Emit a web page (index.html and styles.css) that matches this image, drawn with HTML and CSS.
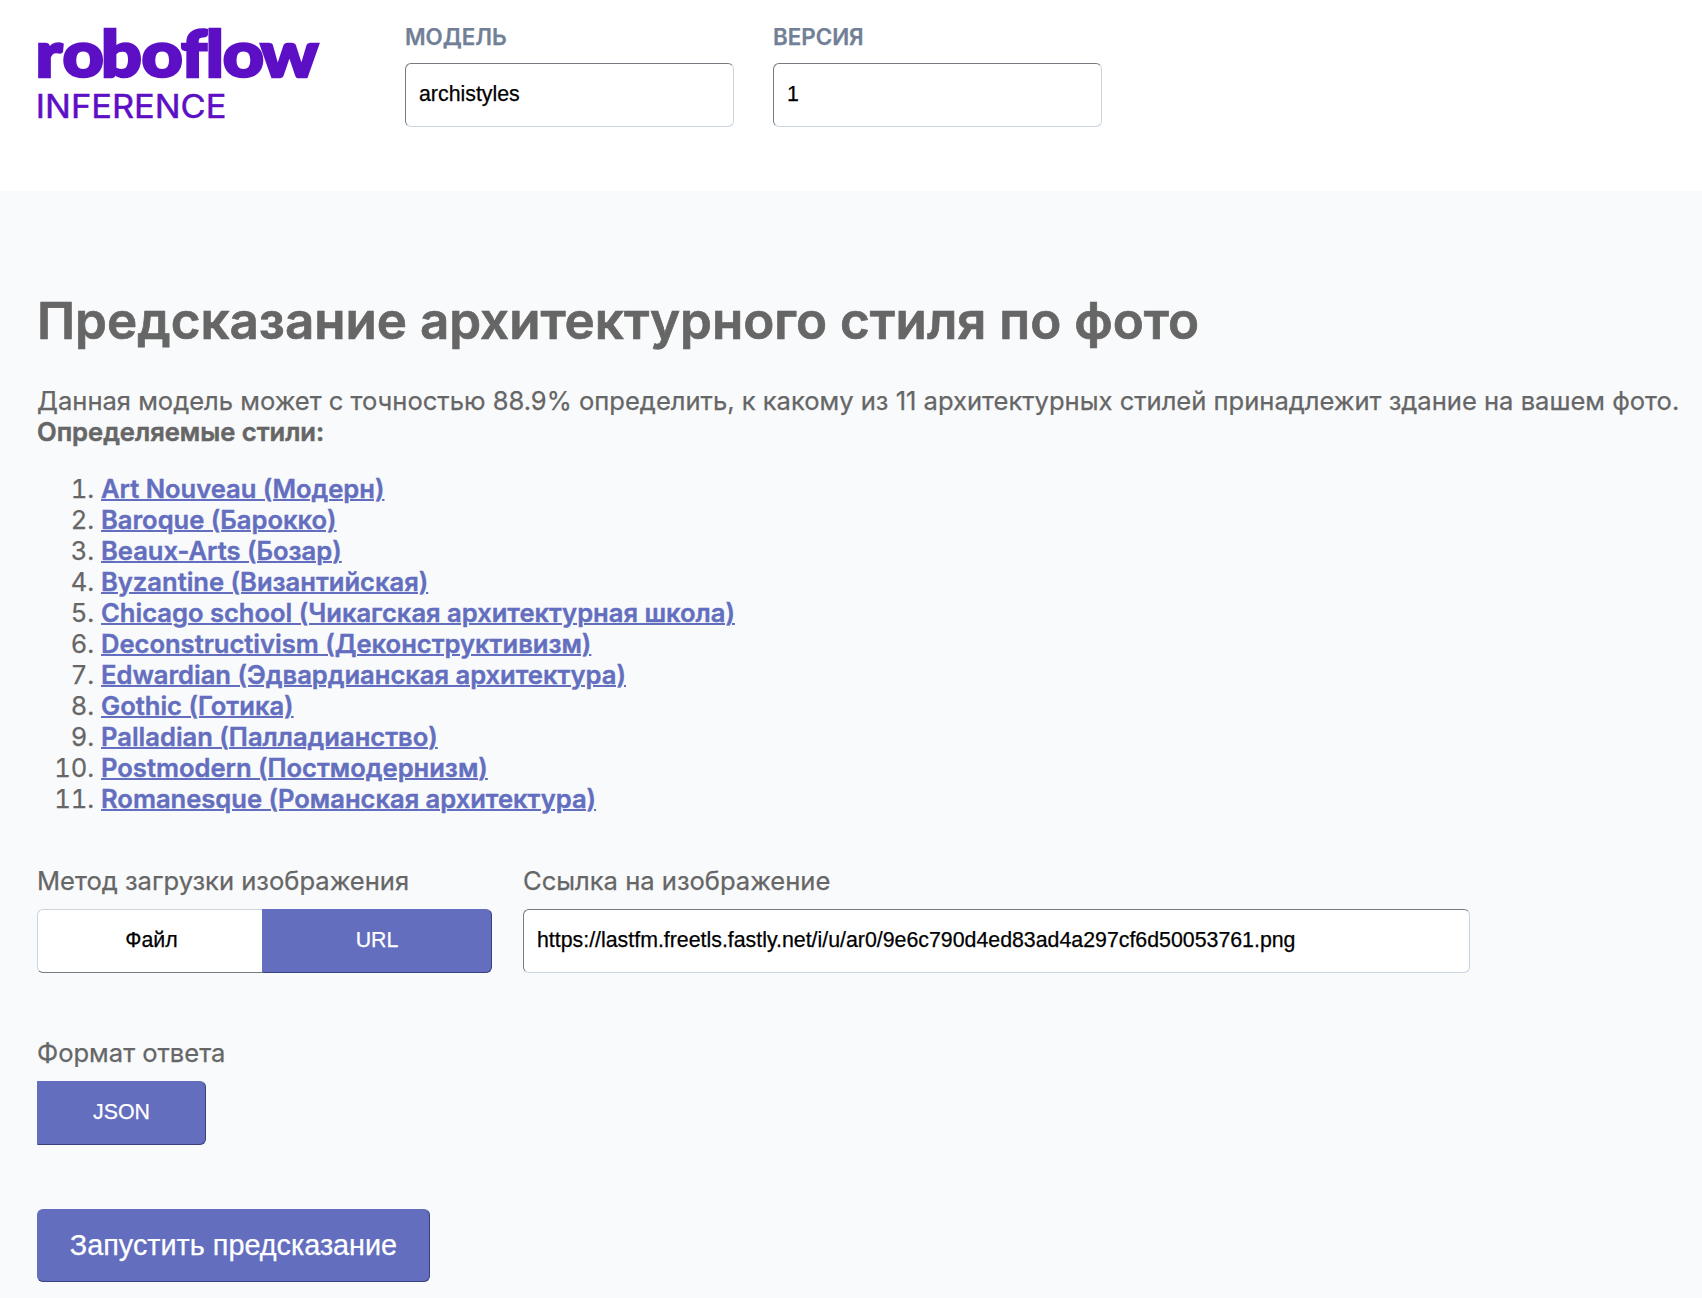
FILE: index.html
```html
<!DOCTYPE html>
<html lang="ru">
<head>
<meta charset="utf-8">
<title>Roboflow Inference</title>
<link rel="stylesheet" href="styles.css">
</head>
<body>
<header class="header">
  <svg class="logo" width="290" height="100" viewBox="0 0 290 100" role="img" aria-label="roboflow inference">
    <text class="logo-name" transform="scale(1.1 1)" x="-2.3 22.2 57.2 94 130 152.5 168 202.3" y="57.2">roboflow</text>
    <text class="logo-sub" x="-2.2" y="98" textLength="190.5" lengthAdjust="spacingAndGlyphs">INFERENCE</text>
  </svg>
  <div class="field">
    <label class="caption" for="model">МОДЕЛЬ</label>
    <input class="input" id="model" type="text" value="archistyles">
  </div>
  <div class="field">
    <label class="caption" for="version">ВЕРСИЯ</label>
    <input class="input" id="version" type="text" value="1">
  </div>
</header>
<main class="main">
  <h1 class="title">Предсказание архитектурного стиля по фото</h1>
  <p class="intro">Данная модель может с точностью 88.9% определить, к какому из 11 архитектурных стилей принадлежит здание на вашем фото.<br><b>Определяемые стили:</b></p>
  <ol class="styles">
    <li><a href="#">Art Nouveau (Модерн)</a></li>
    <li><a href="#">Baroque (Барокко)</a></li>
    <li><a href="#">Beaux-Arts (Бозар)</a></li>
    <li><a href="#">Byzantine (Византийская)</a></li>
    <li><a href="#">Chicago school (Чикагская архитектурная школа)</a></li>
    <li><a href="#">Deconstructivism (Деконструктивизм)</a></li>
    <li><a href="#">Edwardian (Эдвардианская архитектура)</a></li>
    <li><a href="#">Gothic (Готика)</a></li>
    <li><a href="#">Palladian (Палладианство)</a></li>
    <li><a href="#">Postmodern (Постмодернизм)</a></li>
    <li><a href="#">Romanesque (Романская архитектура)</a></li>
  </ol>
  <div class="row">
    <div class="method">
      <div class="label">Метод загрузки изображения</div>
      <div class="toggle">
        <button class="option first">Файл</button>
        <button class="option active last">URL</button>
      </div>
    </div>
    <div class="link">
      <label class="label" for="url">Ссылка на изображение</label>
      <input class="input" id="url" type="text" value="https://lastfm.freetls.fastly.net/i/u/ar0/9e6c790d4ed83ad4a297cf6d50053761.png">
    </div>
  </div>
  <div class="format">
    <div class="label">Формат ответа</div>
    <button class="option active last json">JSON</button>
  </div>
  <button class="run">Запустить предсказание</button>
</main>
</body>
</html>
```
FILE: styles.css
```css
* { box-sizing: border-box; }
html { height: 100%; overflow: hidden; }
body {
  margin: 0;
  height: 1298px;
  background: #f9fafc;
  color: #666;
  font-family: Inter, sans-serif;
  font-size: 25.56px;
  line-height: 31px;
  -webkit-text-stroke: 0.25px;
}
.header {
  display: flex;
  height: 191px;
  padding: 20px 0 0 38px;
  background: #fff;
}
.logo { width: 290px; height: 100px; margin-right: 77px; overflow: visible; fill: #5c0fc4; }
.logo-name { font: 900 65px Lato, sans-serif; stroke: #5c0fc4; stroke-width: 2.6px; }
.logo-sub { font: 400 33px Inter, sans-serif; stroke: #5c0fc4; stroke-width: 0.5px; }
.field { width: 329px; margin-right: 39px; }
.caption {
  display: block;
  height: 43px;
  line-height: 34px;
  font-size: 22.35px;
  font-weight: 600;
  color: #718096;
}
.input {
  display: block;
  width: 100%;
  height: 64px;
  padding: 0 13px 1px;
  border: 1px solid;
  border-color: #767b82 #cbd5e0 #cbd5e0 #767b82;
  border-radius: 6px;
  background: #fff;
  color: #000;
  font: 21.33px "Liberation Sans", Arial, sans-serif;
}
.main { padding: 97px 0 0 37px; }
.title {
  margin: 0;
  font-size: 51.1px;
  line-height: 64px;
  font-weight: 600;
  white-space: nowrap;
  -webkit-text-stroke: 0.7px;
}
.intro { margin: 33px 0 26px; white-space: nowrap; }
.intro b { font-weight: 600; -webkit-text-stroke: 0.5px; }
.styles { margin: 0; padding-left: 64px; }
.styles a {
  color: #636ebf;
  font-weight: 600;
  text-decoration-thickness: 2px;
  -webkit-text-stroke: 0.4px;
}
.row { display: flex; gap: 31px; margin-top: 51px; }
.method { width: 455px; }
.link { width: 947px; }
.label { display: block; height: 44px; line-height: 31px; }
.toggle { display: flex; }
.option {
  width: 225px;
  height: 64px;
  padding: 0 0 1px;
  border: 1px solid;
  border-color: #cbd5e0 transparent #767b82 #cbd5e0;
  border-right: 0;
  border-radius: 6px 0 0 6px;
  background: #fff;
  color: #000;
  font: 21.33px "Liberation Sans", Arial, sans-serif;
}
.first { padding-left: 3px; }
.active {
  border: 1px solid;
  border-color: #636ebf #3b4080 #3b4080 #636ebf;
  background: #636ebf;
  color: #fff;
}
.last { width: 230px; border-radius: 0 6px 6px 0; }
.format { margin-top: 64px; }
.json { display: block; width: 169px; }
.run {
  display: block;
  width: 393px;
  height: 73px;
  margin-top: 64px;
  padding: 0;
  border: 1px solid;
  border-color: #636ebf #3b4080 #3b4080 #636ebf;
  border-radius: 6px;
  background: #636ebf;
  color: #fff;
  font: 28.8px "Liberation Sans", Arial, sans-serif;
}
```
